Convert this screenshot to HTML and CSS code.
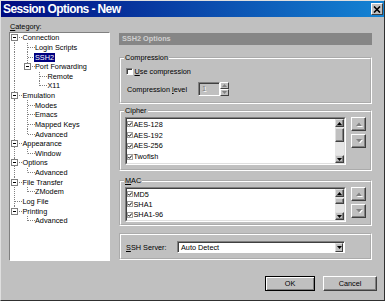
FILE: index.html
```html
<!DOCTYPE html>
<html>
<head>
<meta charset="utf-8">
<link rel="stylesheet" href="styles.css">
</head>
<body>
<div class="window">
  <div class="titlebar">
    <span class="title">Session Options - New</span>
    <span class="close"><svg width="8" height="7" viewBox="0 0 8 7"><path d="M1 0.5 L7 6.5 M7 0.5 L1 6.5" stroke="#000" stroke-width="1.6"/></svg></span>
  </div>
  <div class="content">
    <div class="main">
      <div class="left">
        <div class="cat-label"><u>C</u>ategory:</div>
        <div class="tree">
          <div class="row"><span class="c f"><span class="box"></span></span><span class="txt">Connection</span></div>
          <div class="row"><span class="c v"></span><span class="c t"></span><span class="txt">Login Scripts</span></div>
          <div class="row"><span class="c v"></span><span class="c t"></span><span class="txt sel">SSH2</span></div>
          <div class="row"><span class="c v"></span><span class="c l"><span class="box"></span></span><span class="txt">Port Forwarding</span></div>
          <div class="row"><span class="c v"></span><span class="c"></span><span class="c t"></span><span class="txt">Remote</span></div>
          <div class="row"><span class="c v"></span><span class="c"></span><span class="c l"></span><span class="txt">X11</span></div>
          <div class="row"><span class="c t"><span class="box"></span></span><span class="txt">Emulation</span></div>
          <div class="row"><span class="c v"></span><span class="c t"></span><span class="txt">Modes</span></div>
          <div class="row"><span class="c v"></span><span class="c t"></span><span class="txt">Emacs</span></div>
          <div class="row"><span class="c v"></span><span class="c t"></span><span class="txt">Mapped Keys</span></div>
          <div class="row"><span class="c v"></span><span class="c l"></span><span class="txt">Advanced</span></div>
          <div class="row"><span class="c t"><span class="box"></span></span><span class="txt">Appearance</span></div>
          <div class="row"><span class="c v"></span><span class="c l"></span><span class="txt">Window</span></div>
          <div class="row"><span class="c t"><span class="box"></span></span><span class="txt">Options</span></div>
          <div class="row"><span class="c v"></span><span class="c l"></span><span class="txt">Advanced</span></div>
          <div class="row"><span class="c t"><span class="box"></span></span><span class="txt">File Transfer</span></div>
          <div class="row"><span class="c v"></span><span class="c l"></span><span class="txt">ZModem</span></div>
          <div class="row"><span class="c t"></span><span class="txt">Log File</span></div>
          <div class="row"><span class="c l"><span class="box"></span></span><span class="txt">Printing</span></div>
          <div class="row"><span class="c"></span><span class="c l"></span><span class="txt">Advanced</span></div>
        </div>
      </div>
      <div class="right">
        <div class="header">SSH2 Options</div>
        <fieldset class="group g-comp">
          <legend>Compression</legend>
          <div class="check-row"><span class="cb"></span><span><u>U</u>se compression</span></div>
          <div class="level-row">
            <span class="level-label">Compression <u>l</u>evel</span>
            <span class="spin-edit">1</span>
            <span class="spin-btns">
              <span class="sbtn"><svg width="5" height="3" viewBox="0 0 5 3"><path d="M0 3 L2.5 0 L5 3Z" fill="#808080"/></svg></span>
              <span class="sbtn"><svg width="5" height="3" viewBox="0 0 5 3"><path d="M0 0 L2.5 3 L5 0Z" fill="#808080"/></svg></span>
            </span>
          </div>
        </fieldset>
        <fieldset class="group g-cipher">
          <legend>Cipher</legend>
          <div class="list-row">
            <div class="listbox lb-cipher">
              <div class="lb-inner">
                <div class="items">
                  <div class="item"><span class="ck"><svg width="4" height="4" viewBox="0 0 4 4"><path d="M0.3 2 L1.5 3.3 L3.8 0.5" stroke="#000" stroke-width="1" fill="none"/></svg></span>AES-128</div>
                  <div class="item"><span class="ck"><svg width="4" height="4" viewBox="0 0 4 4"><path d="M0.3 2 L1.5 3.3 L3.8 0.5" stroke="#000" stroke-width="1" fill="none"/></svg></span>AES-192</div>
                  <div class="item"><span class="ck"><svg width="4" height="4" viewBox="0 0 4 4"><path d="M0.3 2 L1.5 3.3 L3.8 0.5" stroke="#000" stroke-width="1" fill="none"/></svg></span>AES-256</div>
                  <div class="item"><span class="ck"><svg width="4" height="4" viewBox="0 0 4 4"><path d="M0.3 2 L1.5 3.3 L3.8 0.5" stroke="#000" stroke-width="1" fill="none"/></svg></span>Twofish</div>
                </div>
                <div class="vscroll">
                  <span class="sb-btn"><svg width="5" height="3" viewBox="0 0 5 3"><path d="M0 3 L2.5 0 L5 3Z" fill="#000"/></svg></span>
                  <span class="sb-thumb th-big"></span>
                  <span class="sb-track"></span>
                  <span class="sb-btn"><svg width="5" height="3" viewBox="0 0 5 3"><path d="M0 0 L2.5 3 L5 0Z" fill="#000"/></svg></span>
                </div>
              </div>
            </div>
            <div class="updown">
              <span class="ud-btn"><svg width="6" height="4" viewBox="0 0 6 4"><path d="M0 4 L3 0.5 L6 4Z" fill="#808080"/></svg></span>
              <span class="ud-btn"><svg width="6" height="4" viewBox="0 0 6 4"><path d="M0 0 L3 3.5 L6 0Z" fill="#808080"/></svg></span>
            </div>
          </div>
        </fieldset>
        <fieldset class="group g-mac">
          <legend><u>M</u>AC</legend>
          <div class="list-row">
            <div class="listbox lb-mac">
              <div class="lb-inner">
                <div class="items">
                  <div class="item"><span class="ck"><svg width="4" height="4" viewBox="0 0 4 4"><path d="M0.3 2 L1.5 3.3 L3.8 0.5" stroke="#000" stroke-width="1" fill="none"/></svg></span>MD5</div>
                  <div class="item"><span class="ck"><svg width="4" height="4" viewBox="0 0 4 4"><path d="M0.3 2 L1.5 3.3 L3.8 0.5" stroke="#000" stroke-width="1" fill="none"/></svg></span>SHA1</div>
                  <div class="item"><span class="ck"><svg width="4" height="4" viewBox="0 0 4 4"><path d="M0.3 2 L1.5 3.3 L3.8 0.5" stroke="#000" stroke-width="1" fill="none"/></svg></span>SHA1-96</div>
                </div>
                <div class="vscroll">
                  <span class="sb-btn"><svg width="5" height="3" viewBox="0 0 5 3"><path d="M0 3 L2.5 0 L5 3Z" fill="#000"/></svg></span>
                  <span class="sb-thumb th-small"></span>
                  <span class="sb-track"></span>
                  <span class="sb-btn"><svg width="5" height="3" viewBox="0 0 5 3"><path d="M0 0 L2.5 3 L5 0Z" fill="#000"/></svg></span>
                </div>
              </div>
            </div>
            <div class="updown">
              <span class="ud-btn"><svg width="6" height="4" viewBox="0 0 6 4"><path d="M0 4 L3 0.5 L6 4Z" fill="#808080"/></svg></span>
              <span class="ud-btn"><svg width="6" height="4" viewBox="0 0 6 4"><path d="M0 0 L3 3.5 L6 0Z" fill="#808080"/></svg></span>
            </div>
          </div>
        </fieldset>
        <fieldset class="group g-ssh">
          <div class="ssh-row">
            <span class="ssh-label"><u>S</u>SH Server:</span>
            <span class="combo">
              <span class="combo-text">Auto Detect</span>
              <span class="combo-btn"><svg width="5" height="3" viewBox="0 0 5 3"><path d="M0 0 L2.5 3 L5 0Z" fill="#000"/></svg></span>
            </span>
          </div>
        </fieldset>
      </div>
    </div>
    <div class="footer">
      <span class="btn default">OK</span>
      <span class="btn cancel">Cancel</span>
    </div>
  </div>
</div>
</body>
</html>
```

FILE: styles.css
```css
* { box-sizing: border-box; }
html, body { margin: 0; padding: 0; }
body {
  width: 385px; height: 301px; overflow: hidden;
  background: #c0c0c0;
  font-family: "Liberation Sans", Arial, sans-serif;
  font-size: 7.3px; color: #000;
}
u { text-decoration-thickness: 1px; text-underline-offset: 1px; }

.window {
  width: 385px; height: 301px;
  background: #c0c0c0;
  border: 1px solid;
  border-color: #dfdfdf #303030 #303030 #dfdfdf;
  display: flex; flex-direction: column;
}
.titlebar {
  height: 16px; flex: none;
  background: linear-gradient(to right, #000a80, #1484d4);
  display: flex; align-items: center; justify-content: space-between;
  padding: 0 1px 0 2px;
}
.title { color: #fff; font-weight: bold; font-size: 12px; letter-spacing: -0.6px; white-space: nowrap; }
.close {
  width: 12px; height: 12px;
  background: #c0c0c0;
  border: 1px solid; border-color: #fff #404040 #404040 #fff;
  display: flex; align-items: center; justify-content: center;
}

.content { flex: 1; display: flex; flex-direction: column; padding: 0 7px 0 8px; }
.main { display: flex; align-items: flex-start; padding-top: 5px; }

.left { width: 101px; flex: none; }
.cat-label { height: 9px; line-height: 9px; padding-left: 1px; }
.tree {
  margin-top: 1px; height: 229px;
  background: #fff;
  border: 1px solid; border-color: #808080 #fff #fff #808080;
  overflow: hidden;
}
.row { height: 9.63px; display: flex; align-items: center; white-space: nowrap; }
.txt { line-height: 9px; }
.sel { background: #000080; color: #fff; margin-left: -1px; padding: 0 1px; }
.c {
  width: 12.5px; height: 100%; flex: none;
  display: flex; align-items: center; padding-left: 1px;
  background-repeat: no-repeat;
}
.v {
  background-image: repeating-linear-gradient(to bottom, #808080 0 1px, transparent 1px 2px);
  background-position: 4px 0; background-size: 1px 100%;
}
.t, .l, .f {
  background-image:
    repeating-linear-gradient(to bottom, #808080 0 1px, transparent 1px 2px),
    repeating-linear-gradient(to right, #808080 0 1px, transparent 1px 2px);
}
.t { background-position: 4px 0, 5px 50%; background-size: 1px 100%, 7.5px 1px; }
.l { background-position: 4px 0, 5px 50%; background-size: 1px 50%, 7.5px 1px; }
.f { background-position: 4px 100%, 5px 50%; background-size: 1px 50%, 7.5px 1px; }
.box {
  width: 7px; height: 7px; background: #fff;
  border: 1px solid #808080;
  display: flex; align-items: center; justify-content: center;
}
.box::after { content: ""; width: 3px; height: 1px; background: #000; }

.right { width: 253px; flex: none; margin-left: 9px; margin-top: 11px; }
.header {
  height: 12px; line-height: 12px;
  background: #868686; color: #d0d0d0;
  font-weight: bold; padding-left: 3px;
}
.group {
  margin: 0; min-inline-size: 0;
  border: 2px groove #fff;
  padding: 0 4px 0 5px;
}
.group legend {
  padding: 0 1px; margin-left: -2px;
  line-height: 9px; height: 9px;
  background: #c0c0c0;
}
.g-comp { margin-top: 8px; height: 51px; }
.g-cipher { margin-top: 2px; height: 65px; }
.g-mac { margin-top: 5px; height: 50px; }
.g-ssh { margin-top: 7px; height: 27px; }

.check-row { margin-top: 5.5px; height: 8px; display: flex; align-items: center; gap: 1.5px; }
.cb {
  width: 7px; height: 7px; background: #fff;
  border: 1px solid; border-color: #808080 #fff #fff #808080;
  box-shadow: inset 1px 1px 0 #404040;
}
.level-row { margin-top: 6.5px; height: 14px; display: flex; align-items: center; }
.level-label { width: 72px; padding-left: 1px; }
.spin-edit {
  width: 22px; height: 14px;
  border: 1px solid; border-color: #808080 #fff #fff #808080;
  box-shadow: inset 1px 1px 0 #404040;
  color: #808080; text-shadow: 1px 1px 0 #fff;
  padding-left: 3px; line-height: 12px;
}
.spin-btns { width: 9px; height: 14px; display: flex; flex-direction: column; }
.sbtn {
  flex: 1; display: flex; align-items: center; justify-content: center;
  border: 1px solid; border-color: #fff #404040 #404040 #fff;
}

.list-row { margin-top: 2px; display: flex; align-items: flex-start; margin-left: -1px; }
.listbox {
  width: 221px;
  border: 1px solid; border-color: #808080 #fff #fff #808080;
}
.lb-cipher { height: 48px; }
.lb-mac { height: 35px; }
.lb-inner {
  height: 100%; display: flex;
  border: 1px solid; border-color: #404040 #dfdfdf #dfdfdf #404040;
  background: #fff;
}
.items { flex: 1; overflow: hidden; }
.item { height: 10.8px; display: flex; align-items: center; white-space: nowrap; }
.lb-mac .item { height: 10.3px; }
.ck {
  width: 6px; height: 6px; margin-right: 0.5px;
  border: 1px solid #a0a0a0;
  display: flex; align-items: center; justify-content: center;
}
.vscroll { width: 9px; flex: none; display: flex; flex-direction: column; background: #e6e6e6; }
.sb-btn, .sb-thumb {
  background: #c0c0c0;
  border: 1px solid; border-color: #dfdfdf #404040 #404040 #dfdfdf;
  box-shadow: inset -1px -1px 0 #808080;
  flex: none;
}
.sb-btn { height: 8px; display: flex; align-items: center; justify-content: center; }
.th-big { height: 14px; margin-top: 1px; }
.th-small { height: 6px; margin-top: 1px; }
.sb-track { flex: 1; }

.updown { margin-left: 5px; width: 15px; display: flex; flex-direction: column; gap: 2.5px; }
.ud-btn {
  height: 14px; background: #c0c0c0;
  border: 1px solid; border-color: #fff #404040 #404040 #fff;
  box-shadow: inset -1px -1px 0 #808080;
  display: flex; align-items: center; justify-content: center;
}
.ud-btn svg { filter: drop-shadow(1px 1px 0 #fff); }

.ssh-row { margin-top: 6px; height: 12px; display: flex; align-items: center; }
.ssh-label { width: 51px; }
.combo {
  width: 168px; height: 12px;
  border: 1px solid; border-color: #808080 #fff #fff #808080;
  box-shadow: inset 1px 1px 0 #404040;
  background: #fff;
  display: flex; align-items: center; justify-content: space-between;
  padding: 1px 1px 1px 3px;
}
.combo-btn {
  width: 8px; height: 9px; background: #c0c0c0;
  border: 1px solid; border-color: #dfdfdf #404040 #404040 #dfdfdf;
  display: flex; align-items: center; justify-content: center;
}

.footer { display: flex; justify-content: flex-end; gap: 8px; margin-top: 15px; }
.btn {
  height: 15px; display: flex; align-items: center; justify-content: center;
  background: #c0c0c0;
  border: 1px solid; border-color: #fff #404040 #404040 #fff;
  box-shadow: inset -1px -1px 0 #808080;
}
.default { width: 50px; border-color: #000; box-shadow: inset 1px 1px 0 #fff, inset -1px -1px 0 #808080; }
.cancel { width: 54px; }
```
